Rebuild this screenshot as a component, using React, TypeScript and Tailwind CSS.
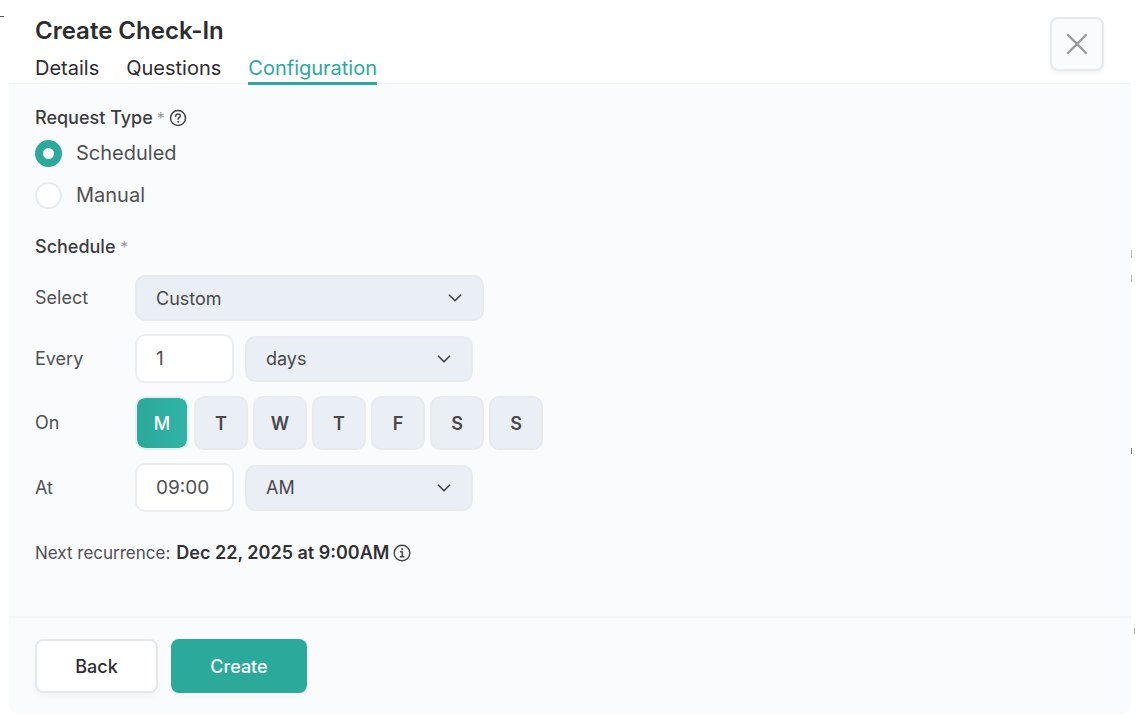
import React, { useState } from 'react';
import { ChevronDownIcon, XIcon } from 'lucide-react';

const tabs = ['Details', 'Questions', 'Configuration'];

const days = [
  { id: 'mon', letter: 'M', name: 'Monday' },
  { id: 'tue', letter: 'T', name: 'Tuesday' },
  { id: 'wed', letter: 'W', name: 'Wednesday' },
  { id: 'thu', letter: 'T', name: 'Thursday' },
  { id: 'fri', letter: 'F', name: 'Friday' },
  { id: 'sat', letter: 'S', name: 'Saturday' },
  { id: 'sun', letter: 'S', name: 'Sunday' },
];

function HelpIcon() {
  return <svg viewBox="0 0 18 18" className="h-[18px] w-[18px]" fill="none" stroke="#444447" strokeLinecap="round" strokeLinejoin="round" aria-hidden="true">
      <circle cx="9" cy="9" r="7.5" strokeWidth="1.5" />
      <path d="M6.7 7.2c0-1.3 1-2.2 2.3-2.2s2.3.9 2.3 2.1c0 1.5-2.2 1.6-2.2 3.2" strokeWidth="1.5" />
      <circle cx="9.1" cy="12.8" r=".5" fill="#444447" strokeWidth=".8" />
    </svg>;
}

function InfoIcon() {
  return <svg viewBox="0 0 18 18" className="h-[18px] w-[18px]" fill="none" stroke="#444447" strokeLinecap="round" strokeLinejoin="round" aria-hidden="true">
      <circle cx="9" cy="9" r="7.8" strokeWidth="1.4" />
      <path d="M7.5 7.8h1.7v4.8M7.3 12.8h3.6" strokeWidth="1.4" />
      <circle cx="9" cy="5.1" r=".7" fill="#444447" strokeWidth=".7" />
    </svg>;
}

interface SelectProps {
  id: string;
  label?: string;
  options: string[];
  className: string;
}

function Select({ id, label, options, className }: SelectProps) {
  return <div className={`relative ${className}`}>
      <select id={id} aria-label={label} className="h-[46px] w-full appearance-none rounded-[10px] border-2 border-[#e8eaee] bg-[#eaeff6] pl-[19px] pr-12 text-[18px] text-[#48484b]">
        {options.map(option => <option key={option}>{option}</option>)}
      </select>
      <ChevronDownIcon className="pointer-events-none absolute right-[18px] top-[12px] h-[22px] w-[22px] text-[#48484b]" strokeWidth={1.9} />
    </div>;
}

const rowLabel = 'w-[100px] shrink-0 text-[18px] leading-6 text-[#505053]';
const textBox = 'h-[49px] w-[99px] rounded-[10px] border-2 border-[#ecedf0] bg-white px-[19px] text-[19px] text-[#505053]';

export default function App() {
  const [tab, setTab] = useState('Configuration');
  const [requestType, setRequestType] = useState('Scheduled');
  const [selected, setSelected] = useState(['mon']);

  const toggleDay = (id: string) => {
    setSelected(selected.includes(id) ? selected.filter(d => d !== id) : [...selected, id]);
  };

  return <div className="relative flex min-h-screen flex-col bg-white pb-[7px] pl-[9px] pr-[7px] pt-[5px] font-['Inter',sans-serif]">
      {/* edges of the page behind the dialog */}
      <div aria-hidden="true">
        <span className="absolute left-0 top-4 h-px w-1 bg-[#555555]" />
        <span className="absolute right-1.5 top-[250px] h-2 w-px bg-[#b5b5b5]" />
        <span className="absolute right-1.5 top-[275px] h-[7px] w-px bg-[#b5b5b5]" />
        <span className="absolute right-1.5 top-[448px] h-1.5 w-px bg-[#777777]" />
        <span className="absolute right-[3px] top-[628px] h-1.5 w-px bg-[#b5b5b5]" />
      </div>

      <div role="dialog" aria-labelledby="title" className="flex grow flex-col overflow-hidden rounded-[10px] bg-[#fafbfd]">
        <header className="flex items-start justify-between border-b border-[#f1f2f7] bg-white pl-[26px] pr-[27px]">
          <div className="pt-3">
            <h1 id="title" className="text-[24px] font-semibold leading-7 text-[#2d2d2f]">Create Check-In</h1>
            <nav className="-mb-0.5 mt-[11px] flex gap-[27px]">
              {tabs.map(name => <button key={name} type="button" onClick={() => setTab(name)} className={`border-b-3 pb-0.5 text-[20px] leading-6 ${tab === name ? 'border-[#2ba99b] text-[#2ba99b]' : 'border-transparent text-[#2d2d2f]'}`}>
                  {name}
                </button>)}
            </nav>
          </div>
          <button type="button" aria-label="Close" className="mt-3 flex h-[54px] w-[54px] items-center justify-center rounded-lg border-2 border-[#e8e9ed] bg-[#fafbfd] shadow-md shadow-gray-100">
            <XIcon className="h-[36px] w-[36px] text-[#98989e]" strokeWidth={1.6} />
          </button>
        </header>

        <main className="grow px-[26px] pt-[22px]">
          <fieldset>
            <legend className="flex items-center text-[18px] font-medium leading-6 text-[#3c3c3f]">
              Request Type
              <span className="ml-1 text-[16px] font-normal text-[#98989c]">*</span>
              <span className="ml-1"><HelpIcon /></span>
            </legend>
            <div className="mt-[10px] flex flex-col gap-[15px]">
              {['Scheduled', 'Manual'].map(type => <label key={type} className="flex items-center gap-[14px] text-[20px] leading-[27px] text-[#505053]">
                  <input type="radio" name="request-type" checked={requestType === type} onChange={() => setRequestType(type)} className="h-[27px] w-[27px] appearance-none rounded-full border-2 border-[#e9eaed] bg-white checked:border-8 checked:border-[#2ba99b]" />
                  {type}
                </label>)}
            </div>
          </fieldset>

          <h2 className="mt-[26px] text-[18px] font-medium leading-6 text-[#3c3c3f]">
            Schedule <span className="text-[16px] font-normal text-[#98989c]">*</span>
          </h2>

          <div className="mt-4 flex flex-col gap-[13px]">
            <div className="flex items-center">
              <label htmlFor="repeat" className={rowLabel}>Select</label>
              <Select id="repeat" options={['Custom', 'Daily', 'Weekly']} className="w-[349px]" />
            </div>
            <div className="flex items-center">
              <label htmlFor="every" className={rowLabel}>Every</label>
              <input id="every" type="text" defaultValue="1" className={textBox} />
              <Select id="unit" label="Unit" options={['days', 'weeks', 'months']} className="ml-[11px] w-[228px]" />
            </div>
            <div className="flex items-center" role="group" aria-labelledby="on-label">
              <span id="on-label" className={rowLabel}>On</span>
              <div className="flex gap-[5px]">
                {days.map(day => {
                const on = selected.includes(day.id);
                return <button key={day.id} type="button" aria-label={day.name} aria-pressed={on} onClick={() => toggleDay(day.id)} className={`h-[54px] w-[54px] rounded-[10px] border-2 text-[18px] ${on ? 'border-[#e3f2f2] bg-gradient-to-r from-[#2ba99b] to-[#30b3a5] bg-clip-padding font-medium text-white' : 'border-[#e8eaee] bg-[#eaeff6] font-semibold text-[#48484b]'}`}>
                      {day.letter}
                    </button>;
              })}
              </div>
            </div>
            <div className="flex items-center">
              <label htmlFor="time" className={rowLabel}>At</label>
              <input id="time" type="text" defaultValue="09:00" className={textBox} />
              <Select id="period" label="AM or PM" options={['AM', 'PM']} className="ml-[11px] w-[228px]" />
            </div>
          </div>

          <p className="mt-[29px] flex items-center text-[17px] leading-6 text-[#505053]">
            Next recurrence:
            <strong className="ml-[6px] text-[18px] font-semibold text-[#323235]">Dec 22, 2025 at 9:00AM</strong>
            <span className="ml-1"><InfoIcon /></span>
          </p>
        </main>

        <footer className="flex gap-[13px] border-t-2 border-[#f4f5f8] px-[26px] pb-[21px] pt-[21px]">
          <button type="button" className="h-[54px] w-[123px] rounded-lg border-2 border-[#e6e7ec] bg-white text-[18px] font-medium text-[#2d2d2f] shadow-md shadow-gray-100">
            Back
          </button>
          <button type="button" className="h-[54px] w-[136px] rounded-lg bg-[#2ba99b] text-[18px] font-medium text-white shadow-md shadow-gray-100">
            Create
          </button>
        </footer>
      </div>
    </div>;
}
